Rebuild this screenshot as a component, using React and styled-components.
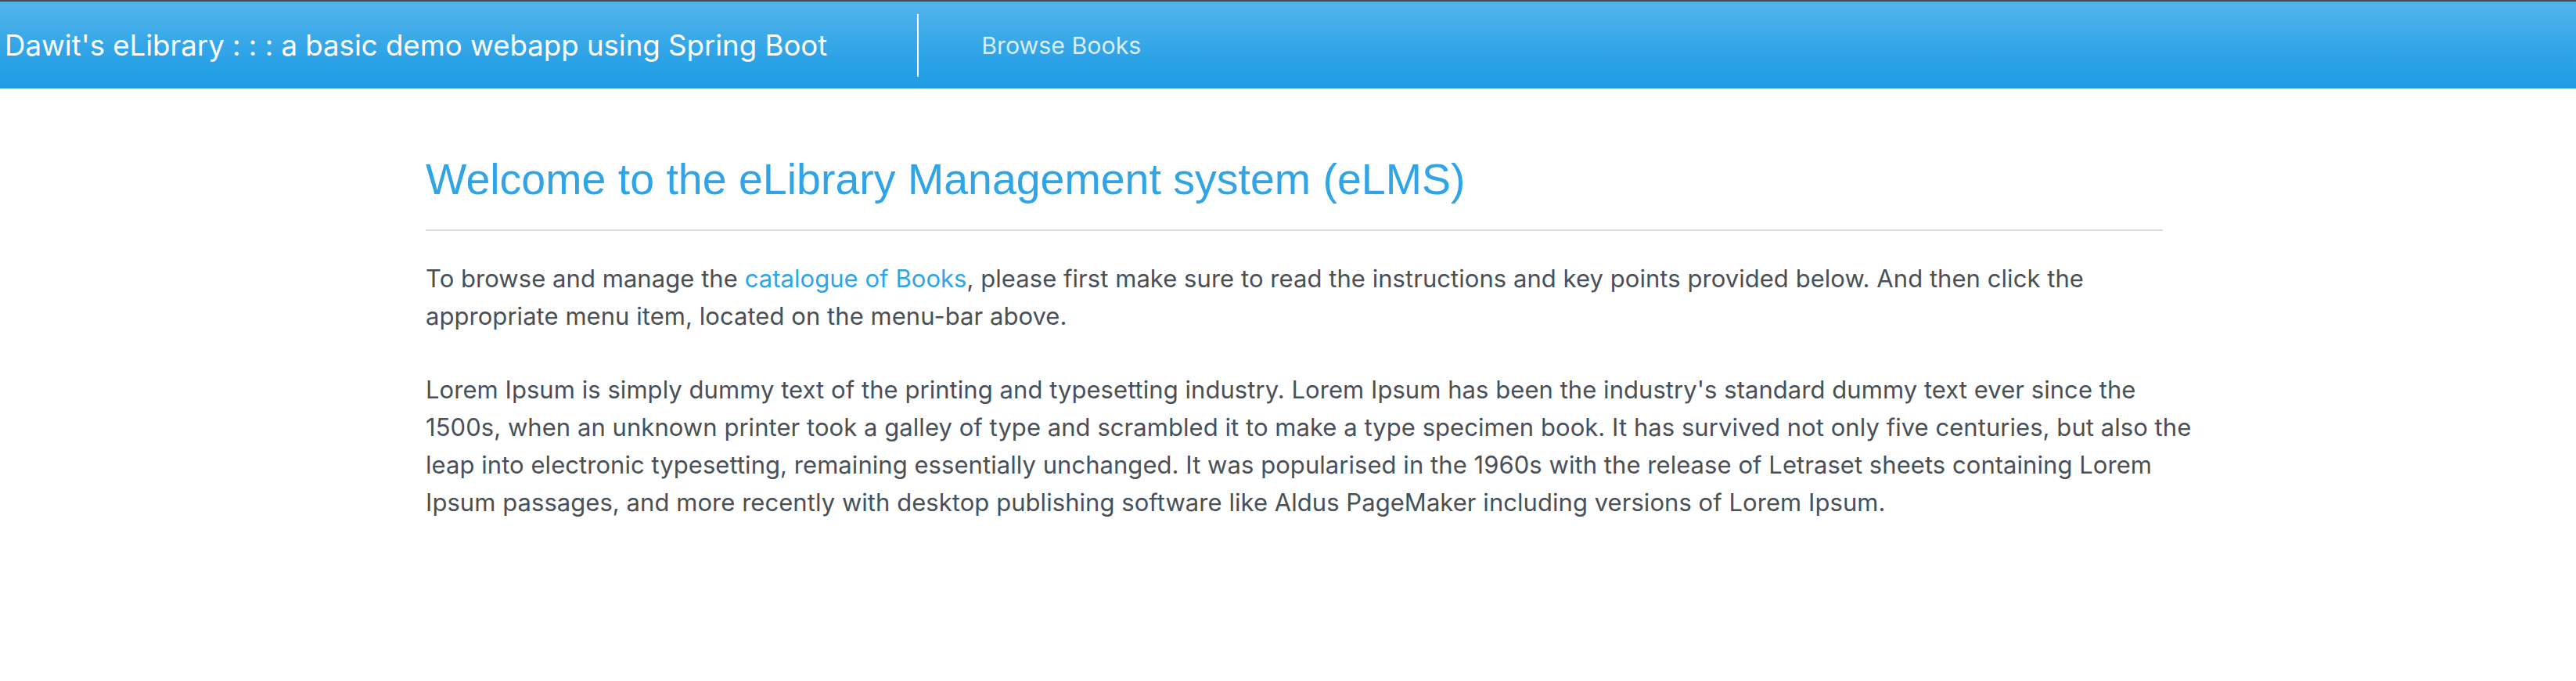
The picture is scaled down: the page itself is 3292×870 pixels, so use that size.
import React from "react";
import styled, { createGlobalStyle } from "styled-components";

const Global = createGlobalStyle`
  html, body { margin: 0; padding: 0; background: #fff; }
  body { font-family: Inter, "Noto Sans", sans-serif; color: #495057; }
`;

const NavBar = styled.nav`
  display: flex;
  align-items: center;
  height: 111px;
  border-top: 2px solid #4a4a4a;
  background-image: linear-gradient(#54b4eb, #2fa4e7 60%, #1d9ce5);
  padding-left: 6px;
`;

const Brand = styled.a`
  font-family: Inter, "Noto Sans", sans-serif;
  font-size: 36.6px;
  color: #fff;
  text-decoration: none;
  white-space: nowrap;
`;

const Divider = styled.span`
  display: block;
  width: 2px;
  height: 80px;
  background: #fff;
  margin-left: ${(p) => p.$left}px;
`;

const NavLink = styled.a`
  font-family: Inter, "Noto Sans", sans-serif;
  font-size: 30.3px;
  color: rgba(255, 255, 255, 0.82);
  text-decoration: none;
  margin-left: 80px;
`;

const Main = styled.main`
  width: 2220px;
  margin-left: 544px;
  padding-top: 83px;
`;

const Title = styled.h1`
  font-family: "Liberation Sans", Arial, sans-serif;
  font-weight: 400;
  font-size: 55.5px;
  line-height: 1.2;
  color: #2fa4e7;
  margin: 0;
`;

const Rule = styled.hr`
  border: 0;
  border-top: 2px solid #dedede;
  margin: 30px 0 37px;
`;

const Para = styled.p`
  font-size: 31px;
  letter-spacing: 0.05px;
  line-height: 48px;
  margin: 0 -50px ${(p) => p.$gap}px 0;
  color: #495057;
`;

const Link = styled.a`
  color: #2fa4e7;
  text-decoration: none;
`;

export default function App() {
  return (
    <>
      <Global />
      <NavBar>
        <Brand href="#">Dawit's eLibrary : : : a basic demo webapp using Spring Boot</Brand>
        <Divider $left={115} />
        <NavLink href="#">Browse Books</NavLink>
      </NavBar>
      <Main>
        <Title>Welcome to the eLibrary Management system (eLMS)</Title>
        <Rule />
        <Para $gap={46}>
          To browse and manage the <Link href="#">catalogue of Books</Link>, please first make sure to read the
          instructions and key points provided below. And then click the appropriate menu item, located on the
          menu-bar above.
        </Para>
        <Para $gap={48}>
          Lorem Ipsum is simply dummy text of the printing and typesetting industry. Lorem Ipsum has been the
          industry's standard dummy text ever since the 1500s, when an unknown printer took a galley of type and
          scrambled it to make a type specimen book. It has survived not only five centuries, but also the leap into
          electronic typesetting, remaining essentially unchanged. It was popularised in the 1960s with the release of
          Letraset sheets containing Lorem Ipsum passages, and more recently with desktop publishing software like
          Aldus PageMaker including versions of Lorem Ipsum.
        </Para>
      </Main>
    </>
  );
}
